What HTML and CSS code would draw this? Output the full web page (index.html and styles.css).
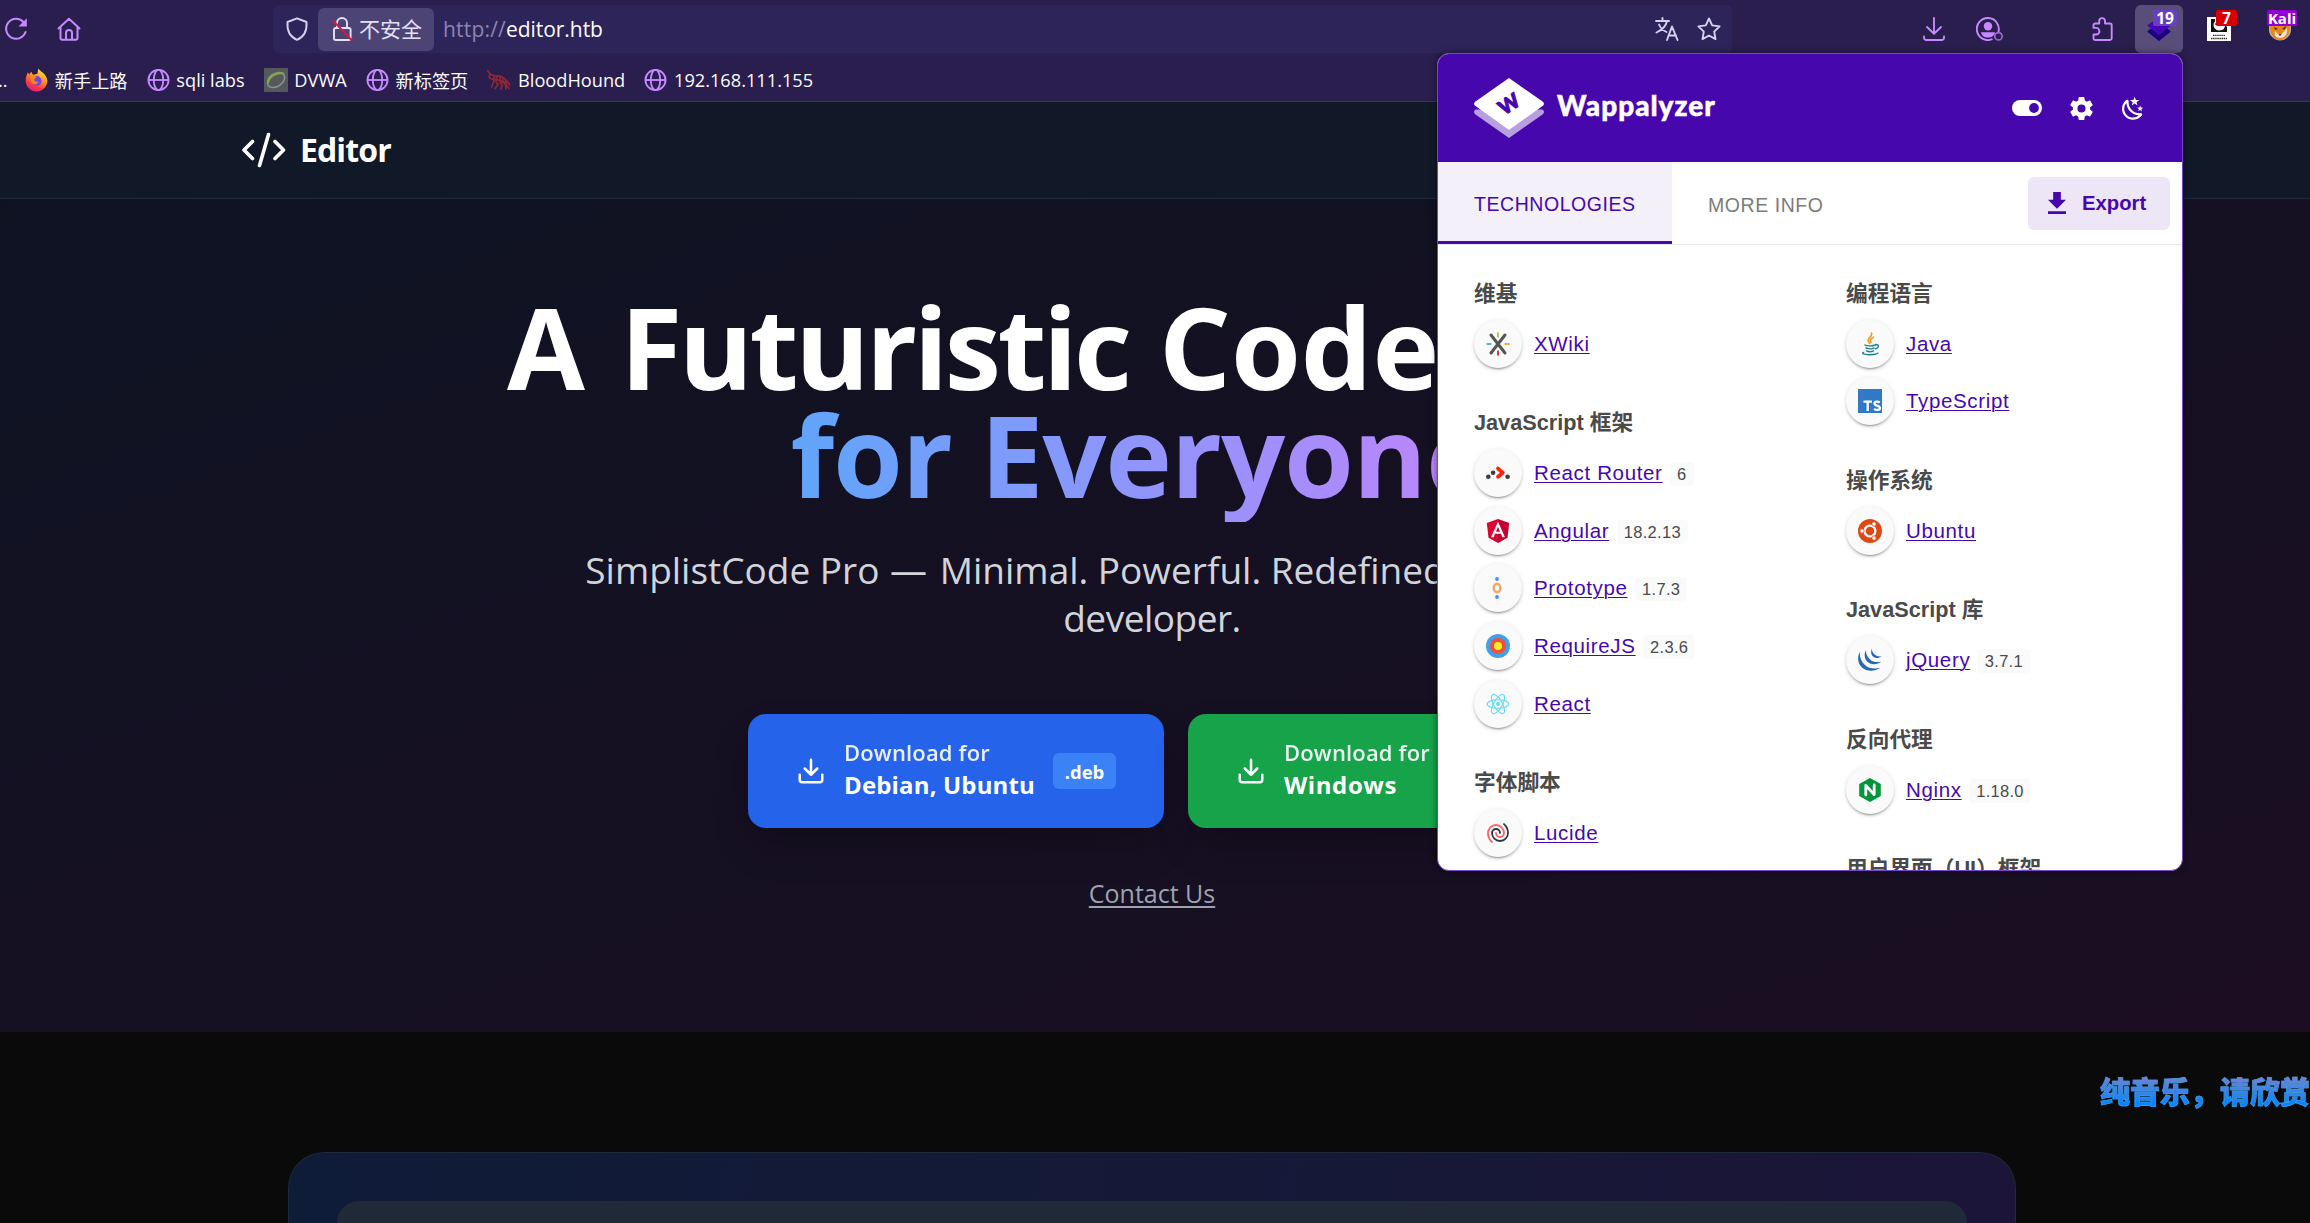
FILE: index.html
```html
<!DOCTYPE html>
<html lang="zh-CN">
<head>
<meta charset="utf-8">
<title>Editor</title>
<link rel="stylesheet" href="styles.css">
</head>
<body>
<svg class="defs" width="0" height="0">
  <symbol id="globe" viewBox="0 0 16 16"><g fill="none" stroke="currentColor" stroke-width="1.3"><circle cx="8" cy="8" r="7"/><ellipse cx="8" cy="8" rx="3.3" ry="7"/><path d="M1 8h14"/></g></symbol>
  <symbol id="dl" viewBox="0 0 24 24"><path fill="none" stroke="currentColor" stroke-width="2" stroke-linecap="round" stroke-linejoin="round" d="M12 3v12M7 10l5 5 5-5M21 15v4a2 2 0 0 1-2 2H5a2 2 0 0 1-2-2v-4"/></symbol>
</svg>

<div class="chrome">
  <div class="toolbar">
    <svg class="ic reload" viewBox="0 0 24 24"><path fill="none" stroke="currentColor" stroke-width="2" stroke-linecap="round" d="M21.6 15A10 10 0 1 1 19.5 5"/><path fill="currentColor" d="M22.8 1.2v8.300h-8.300z"/></svg>
    <svg class="ic home" viewBox="0 0 24 24"><path fill="none" stroke="currentColor" stroke-width="2" stroke-linejoin="round" stroke-linecap="round" d="M1.500 11.500L12 1.800l10.500 9.700M3.500 10v11a1.800 1.800 0 0 0 1.800 1.800h13.400a1.800 1.800 0 0 0 1.800-1.800V10M9 22.500v-6.500a3 3 0 0 1 6 0v6.500"/></svg>
    <div class="urlbar">
      <svg class="ic shield" viewBox="0 0 24 24"><path fill="none" stroke="currentColor" stroke-width="1.900" stroke-linejoin="round" d="M12 1.300l9.500 3.700c.6 7.500-1.800 14.500-9.500 17.800C4.300 19.500 1.900 12.500 2.500 5z"/></svg>
      <div class="identity">
        <svg class="ic lock" viewBox="0 0 21 24"><path fill="none" stroke="currentColor" stroke-width="1.900" d="M5 11V6a5 5 0 0 1 10 0v5M3.800 11h13a1.800 1.800 0 0 1 1.800 1.800v8.400a1.800 1.800 0 0 1-1.800 1.800h-13A1.800 1.800 0 0 1 2 21.200v-8.400A1.800 1.800 0 0 1 3.800 11z"/><path stroke="#e2123f" stroke-width="2" stroke-linecap="round" d="M1.500 4l18 19"/></svg>
        <span>不安全</span>
      </div>
      <div class="url"><span class="scheme">http://</span><span class="host">editor.htb</span></div>
      <svg class="ic translate" viewBox="0 0 24 24"><g fill="none" stroke="currentColor" stroke-width="1.900" stroke-linecap="round" stroke-linejoin="round"><path d="M1 4h13M7.500 1v3M12 4c-1 5-5 9-10.500 11.500M4 7.500c1.500 3.500 4 6 7.500 7.500M12 23l5-13.500L22.500 23M13.500 18.500h7.500"/></g></svg>
      <svg class="ic star" viewBox="0 0 24 24"><path fill="none" stroke="currentColor" stroke-width="1.900" stroke-linejoin="round" d="M12 1.500l3.200 6.900 7.400 1-5.400 5.200 1.300 7.500L12 18.500l-6.500 3.600 1.300-7.500L1.400 9.400l7.400-1z"/></svg>
    </div>
    <svg class="ic download" viewBox="0 0 24 24"><path fill="none" stroke="currentColor" stroke-width="1.900" stroke-linecap="round" stroke-linejoin="round" d="M12 1v15.500M5 10l7 6.800 7-6.800M2 19.500v1.300A2.200 2.200 0 0 0 4.200 23h15.600a2.200 2.200 0 0 0 2.200-2.200v-1.300"/></svg>
    <svg class="ic account" viewBox="0 0 28 24"><path fill="none" stroke="currentColor" stroke-width="1.900" d="M16.500 22A11 11 0 1 1 22.400 15"/><circle cx="12" cy="9.300" r="4.200" fill="currentColor"/><path fill="currentColor" d="M5 15.200h14c-.6 3.600-3.600 5.400-7 5.400s-6.400-1.800-7-5.400z"/><circle cx="22.500" cy="19.300" r="3.700" fill="none" stroke="currentColor" stroke-width="1.700" opacity=".7"/></svg>
    <svg class="ic puzzle" viewBox="0 0 21 24"><path fill="none" stroke="currentColor" stroke-width="1.900" stroke-linejoin="round" d="M1.500 10.500V8.200A1.700 1.700 0 0 1 3.200 6.500h4V4a2.900 2.900 0 0 1 5.800 0v2.500h5A1.700 1.700 0 0 1 19.700 8.200v13A1.700 1.700 0 0 1 18 23H3.200a1.700 1.700 0 0 1-1.700-1.700v-3.800h2.600a3.300 3.300 0 0 0 0-6.600H1.500z"/></svg>
    <div class="ext ext-active">
      <svg viewBox="0 0 24 24" width="24" height="24"><path fill="#1a0080" d="M12 24L0 14.500 12 5l12 9.500z"/><path fill="#4608b4" d="M12 18L0 8.500 12 0l12 8.500z"/></svg>
      <span class="badge badge-19">19</span>
    </div>
    <div class="ext">
      <svg viewBox="0 0 24 24" width="24" height="24"><path fill="#fff" d="M0 0h24v24H0z"/><path fill="#111" d="M4 2h4v5c-1 3 0 6 4 6.500 5 0 6-3 6-5.500l2 2v5H4v-4z"/><circle cx="11.500" cy="8" r="5" fill="#f4f4f4"/><circle cx="9.500" cy="7" r="1.200"/><circle cx="13.500" cy="7" r="1.200"/><path stroke="#333" stroke-width="1.300" stroke-dasharray="1.500 .6" d="M6 18.300h12M4 21.500h16"/></svg>
      <span class="badge badge-7">7</span>
    </div>
    <div class="ext">
      <svg viewBox="0 0 24 24" width="24" height="24"><path fill="#b5b0a4" d="M1 6h22v7c0 6-6 10.500-11 10.500S1 19 1 13z"/><path fill="#e8861b" d="M2.500 7l19-.5c2 8-3 16.500-9.500 16.500S1 16 2.500 7z"/><path fill="#eee7dc" d="M7 14l5 5 7-8c1 7-3 10-7 10s-6-3-5-7z"/><path fill="#5b2b0a" d="M6 10l4 2-3 1zM18 9l-4 3 3 .5zM10.500 17h3l-1.500 2z"/></svg>
      <span class="badge badge-kali">Kali</span>
    </div>
  </div>
  <div class="bookmarks">
    <span class="cut">..</span>
    <span class="bm"><svg viewBox="0 0 24 24" width="23" height="24"><defs><linearGradient id="fx" x1=".8" y1="0" x2=".3" y2="1"><stop offset="0" stop-color="#fff14a"/><stop offset=".4" stop-color="#ff9a1f"/><stop offset=".75" stop-color="#ff3b46"/><stop offset="1" stop-color="#e31587"/></linearGradient></defs><path fill="url(#fx)" d="M14 0c1 3 8.500 5 9.300 12.500C23.500 19 18 24 12 24S.5 19 .7 12.500C.8 9 2 6.500 3 4c.6 1 1 1.800 1.500 2.500C5 5 6 4 7 3.500c0 1.500.5 2.500 2 3l4-1C13.500 3.500 13.500 1.500 14 0z"/><circle cx="12" cy="13" r="5.200" fill="#7542e5"/><path fill="#ff8a16" d="M6 8c3-1 5 0 6.500 1.500-2 0-2.500 1.300-3 2.500.8 2 2.500 2 4.500 1.500-1 3-4 4-6 2.500S5 11 6 8z"/></svg>新手上路</span>
    <span class="bm"><svg class="gl"><use href="#globe"/></svg>sqli labs</span>
    <span class="bm"><svg viewBox="0 0 24 24" width="24" height="24"><path fill="#55595c" d="M0 0h24v24H0z"/><ellipse cx="12" cy="12" rx="9.500" ry="6.500" fill="none" stroke="#8d9295" stroke-width="1.500" transform="rotate(-35 12 12)"/><path fill="none" stroke="#82a83a" stroke-width="2" d="M4 15C5 9 12 4 20 5.500"/></svg>DVWA</span>
    <span class="bm"><svg class="gl"><use href="#globe"/></svg>新标签页</span>
    <span class="bm"><svg viewBox="0 0 24 24" width="24" height="24"><g fill="none" stroke="#8f2638" stroke-width="1.700" stroke-linecap="round"><path d="M.8 3l3 3.500 5 1.500c5-1 10 2 14 9M3 5.500l-1 4 4 2M7 8v5l-2.500 6M10 8.500l-1 5 2 3-3 4M13 9v5l2 3-1 4M16 10.500l-1 3 3.500 3.500.5 4M19 12.500v4l3 4M6 11l5 1 5 1 4 2"/></g></svg>BloodHound</span>
    <span class="bm"><svg class="gl"><use href="#globe"/></svg>192.168.111.155</span>
  </div>
</div>

<header class="site-header">
  <div class="brand">
    <svg viewBox="0 0 48 40" width="48" height="40"><path fill="none" stroke="#fff" stroke-width="3.600" stroke-linecap="round" stroke-linejoin="round" d="M12.500 11.500L4 20l8.500 8.500M35 11.500l8.500 8.500-8.500 8.500M28.500 4.500l-9 31"/></svg>
    <span>Editor</span>
  </div>
</header>

<section class="hero">
  <h1><span class="l1"><b class="w-a">A</b> <b class="w-futuristic">Futuristic</b> <b>Code Editor</b></span><span class="l2">for Everyone</span></h1>
  <p class="lead">SimplistCode Pro <span class="dash">—</span> Minimal. Powerful. Redefined for the modern <span class="tail">developer.</span></p>
  <div class="cta">
    <a class="btn blue"><svg width="30" height="30"><use href="#dl"/></svg><span class="lbl"><small>Download for</small><b>Debian, Ubuntu</b></span><i>.deb</i></a>
    <a class="btn green"><svg width="30" height="30"><use href="#dl"/></svg><span class="lbl"><small>Download for</small><b>Windows</b></span><i>.exe</i></a>
  </div>
  <a class="contact">Contact Us</a>
</section>

<section class="preview">
  <div class="card"><div class="inner"></div></div>
</section>

<div class="lyrics">纯音乐，请欣赏</div>

<aside class="panel">
  <div class="p-head">
    <svg class="logo" viewBox="0 0 72 62" width="72" height="62"><path fill="#b79fe0" d="M2.500 32.500h67q3 2.500 0 5L36 61 2.500 37.500q-3-2.500 0-5z"/><path fill="#fff" d="M36 1l33.500 23.500q3 2.300 0 4.600L36 53 2.500 29.100q-3-2.300 0-4.600z"/><text class="mark" x="36" y="34" text-anchor="middle" transform="rotate(-33 36 27)">W</text></svg>
    <span class="name">Wappalyzer</span>
    <svg class="toggle" viewBox="0 0 30 16" width="30" height="16"><rect width="30" height="16" rx="8" fill="#fff"/><circle cx="22" cy="8" r="4.900" fill="#4608ad"/></svg>
    <svg class="gear" viewBox="2 2 20 20" width="23" height="23"><path fill="#fff" d="M12 15.500A3.500 3.500 0 0 1 8.500 12 3.500 3.500 0 0 1 12 8.500a3.500 3.500 0 0 1 3.500 3.500 3.500 3.500 0 0 1-3.500 3.500m7.430-2.530c.04-.32.070-.64.070-.97s-.03-.66-.07-1l2.110-1.630c.19-.15.24-.42.12-.64l-2-3.460c-.12-.22-.39-.31-.61-.22l-2.490 1c-.52-.39-1.060-.73-1.690-.98l-.37-2.650A.506.506 0 0 0 14 2h-4c-.25 0-.46.180-.5.420l-.37 2.650c-.63.250-1.170.590-1.690.980l-2.490-1c-.22-.09-.49 0-.61.220l-2 3.460c-.13.220-.07.490.12.640L4.570 11c-.04.340-.07.670-.07 1s.03.650.07.970l-2.110 1.660c-.19.150-.25.420-.12.640l2 3.460c.12.220.39.300.61.220l2.490-1.010c.52.400 1.060.740 1.690.990l.37 2.650c.04.240.25.420.5.420h4c.25 0 .46-.18.500-.42l.37-2.650c.63-.26 1.170-.59 1.690-.99l2.490 1.010c.22.080.49 0 .61-.22l2-3.460c.12-.22.070-.49-.12-.64l-2.110-1.660Z"/></svg>
    <svg class="moon" viewBox="2 1.500 20 20.500" width="22" height="23"><path fill="#fff" d="m17.750 4.090-2.530 1.940.91 3.060-2.630-1.810-2.630 1.810.91-3.060-2.530-1.940L12.440 4l1.060-3 1.060 3 3.190.09m3.500 6.910-1.640 1.250.59 1.980-1.700-1.170-1.700 1.170.59-1.980L15.750 11l2.060-.05L18.500 9l.69 1.950 2.060.05m-2.280 4.950c.83-.08 1.720 1.100 1.190 1.850-.32.450-.66.870-1.080 1.270C15.170 23 8.840 23 4.940 19.070c-3.910-3.900-3.910-10.240 0-14.140.4-.4.820-.76 1.270-1.080.75-.53 1.930.36 1.850 1.190-.27 2.860.69 5.830 2.890 8.020a9.960 9.960 0 0 0 8.020 2.890m-1.640 2.020a12.080 12.080 0 0 1-7.800-3.470c-2.170-2.190-3.330-5-3.490-7.820-2.810 3.140-2.700 7.960.31 10.980 3.020 3.010 7.840 3.120 10.980.31Z"/></svg>
  </div>
  <div class="p-tabs">
    <span class="tab on">TECHNOLOGIES</span><span class="tab">MORE INFO</span>
    <span class="export"><svg viewBox="5 3 14 17" width="18" height="22"><path fill="#4608ad" d="M5 20h14v-2H5m14-9h-4V3H9v6H5l7 7 7-7Z"/></svg>Export</span>
  </div>
  <div class="p-body">
    <div class="col">
      <h4>维基</h4>
      <ul>
        <li><i><svg viewBox="0 0 24 24"><path stroke="#555" stroke-width="3" stroke-linecap="round" d="M5 3l14 18M19 3L5 21"/><path stroke="#9c3" stroke-width="1.800" d="M12 .5v5"/><path stroke="#d23" stroke-width="1.800" d="M12 18.500v5"/><path stroke="#4ad" stroke-width="1.800" d="M.5 12h5"/><path stroke="#f93" stroke-width="1.800" d="M18.500 12h5"/></svg></i><a>XWiki</a></li>
      </ul>
      <h4>JavaScript 框架</h4>
      <ul>
        <li><i><svg viewBox="0 0 24 24"><g fill="#3d3d3d"><circle cx="2.300" cy="15.800" r="2.300"/><circle cx="7.100" cy="11.700" r="2.300"/><circle cx="21.600" cy="15.800" r="2.300"/></g><path fill="none" stroke="#f21" stroke-width="3.800" stroke-linecap="round" stroke-linejoin="round" d="M12 7.600l4.800 4.100L12 15.800"/></svg></i><a>React Router</a><em>6</em></li>
        <li><i><svg viewBox="0 0 24 24"><path fill="#dd0031" d="M12 0L.8 4l1.700 14.800L12 24z"/><path fill="#c3002f" d="M12 0l11.200 4-1.700 14.800L12 24z"/><path fill="#fff" d="M12 2.700L5 18.300h2.600L9 14.800h6l1.400 3.500H19zm2 10H10l2-4.900z"/></svg></i><a>Angular</a><em>18.2.13</em></li>
        <li><i><svg viewBox="0 0 24 24"><circle cx="11" cy="3" r="1.900" fill="#4f8df5"/><circle cx="11" cy="21" r="1.900" fill="#4f8df5"/><ellipse cx="11" cy="12" rx="3.300" ry="4.200" fill="none" stroke="#f9a45c" stroke-width="2.400"/></svg></i><a>Prototype</a><em>1.7.3</em></li>
        <li><i><svg viewBox="0 0 24 24"><circle cx="12" cy="12" r="12" fill="#42a0e8"/><circle cx="12" cy="12" r="8" fill="#f04e3e"/><circle cx="12" cy="12" r="4" fill="#fff21f"/></svg></i><a>RequireJS</a><em>2.3.6</em></li>
        <li><i><svg viewBox="0 0 24 24"><circle cx="12" cy="12" r="2" fill="#61dafb"/><g fill="none" stroke="#61dafb" stroke-width="1.100"><ellipse cx="12" cy="12" rx="10.800" ry="4.300"/><ellipse cx="12" cy="12" rx="10.800" ry="4.300" transform="rotate(60 12 12)"/><ellipse cx="12" cy="12" rx="10.800" ry="4.300" transform="rotate(120 12 12)"/></g></svg></i><a>React</a></li>
      </ul>
      <h4>字体脚本</h4>
      <ul>
        <li><i><svg viewBox="0 0 24 24"><g fill="none" stroke-width="1.800" stroke-linecap="round"><path stroke="#2d3748" d="M14 12a4 4 0 0 0-8 0 8 8 0 0 0 16 0 11.970 11.970 0 0 0-4-8.944"/><path stroke="#f56565" d="M10 12a4 4 0 0 0 8 0 8 8 0 1 0-16 0 11.970 11.970 0 0 0 4.063 9"/></g></svg></i><a>Lucide</a></li>
      </ul>
    </div>
    <div class="col">
      <h4>编程语言</h4>
      <ul>
        <li><i><svg viewBox="0 0 24 24"><path fill="none" stroke="#f8981d" stroke-width="1.600" stroke-linecap="round" d="M13.500 1c1.500 4-5 5-3 8.500l1.200 2.200M15.500 5.200c-3 1.500-4 3-2.500 5"/><g fill="none" stroke="#20809a" stroke-width="1.400" stroke-linecap="round"><path d="M7 13c2 1.300 8 1 10.500 0M17.500 12.500c4-.3 3.500 3.500 0 4.300M8 16c2 1 6 1 8 0M8.500 18.800c2 1 5 1 7 0M5.500 20.500C3 21.500 6 22.600 11 22.700s9-.8 9-1.700"/></g></svg></i><a>Java</a></li>
        <li><i><svg viewBox="0 0 24 24"><path fill="#3178c6" d="M0 0h24v24H0z"/><path fill="none" stroke="#fff" stroke-width="2.300" d="M5.500 12.600h8.400M9.700 12.600V22M21.800 13.500c-1.800-1.200-5.300-1.300-5.300 1.100 0 2.700 5.500 1.700 5.500 4.400 0 2.600-4 2.400-6 .8"/></svg></i><a>TypeScript</a></li>
      </ul>
      <h4>操作系统</h4>
      <ul>
        <li><i><svg viewBox="0 0 24 24"><circle cx="12" cy="12" r="12" fill="#dd4814"/><circle cx="12" cy="12" r="5.400" fill="none" stroke="#fff" stroke-width="2.300"/><g fill="#fff" stroke="#dd4814" stroke-width=".8"><circle cx="4" cy="12" r="2.200"/><circle cx="16" cy="5" r="2.200"/><circle cx="16" cy="19" r="2.200"/></g></svg></i><a>Ubuntu</a></li>
      </ul>
      <h4>JavaScript 库</h4>
      <ul>
        <li><i><svg viewBox="0 0 24 24"><g fill="#2968b2"><path d="M2.200 3.500C-.8 8.500-.8 15 4 19.500c5 4.300 12.500 4.200 18.500.3 -6 1.700-12 .8-15.800-3C2.900 13 1.200 8.300 2.200 3.500z"/><path d="M8 2C5.800 6.500 6.300 11 9.800 14c3.800 3.200 9.400 2.900 13.600-.5-4.200 1.200-8.400.6-11.300-2C9.300 9 7.700 5.800 8 2z"/><path d="M13.800 .8c-1.300 3.400-.8 6.200 1.500 8 2.500 1.900 5.800 1.700 8.500-.5-2.700.6-5.200.1-7.200-1.700-1.700-1.500-2.700-3.400-2.800-5.800z"/></g></svg></i><a>jQuery</a><em>3.7.1</em></li>
      </ul>
      <h4>反向代理</h4>
      <ul>
        <li><i><svg viewBox="0 0 24 24"><path fill="#009639" d="M12 0l10.800 6v12L12 24 1.200 18V6z"/><path fill="none" stroke="#fff" stroke-width="2.800" stroke-linecap="round" stroke-linejoin="round" d="M7.800 17V7.500L16.200 16.500V7"/></svg></i><a>Nginx</a><em>1.18.0</em></li>
      </ul>
      <h4>用户界面（UI）框架</h4>
    </div>
  </div>
</aside>
</body>
</html>
```
FILE: styles.css
```css
* { box-sizing: border-box; margin: 0; padding: 0; }
body {
  position: relative;
  width: 2310px;
  height: 1223px;
  overflow: hidden;
  background: #0a0a0a;
  color: #fff;
  font-family: "Open Sans", "Noto Sans", "Noto Sans CJK SC", sans-serif;
}
ul { list-style: none; }
svg { display: block; flex: none; }
.defs { position: absolute; }

/* browser chrome */
.chrome {
  height: 102px;
  background: #291e4d;
  border-bottom: 1px solid #3a3266;
  color: #fbfbfe;
}
.toolbar { display: flex; align-items: center; height: 58px; color: #c689ff; }
.ic { width: 24px; height: 24px; }
.reload { margin-left: 4px; }
.home { margin-left: 29px; margin-right: 192px; }
.urlbar {
  display: flex;
  flex: none;
  align-items: center;
  width: 1459px;
  height: 48px;
  padding: 0 11px 0 12px;
  border-radius: 6px;
  background: #2d2559;
  color: #d9d0f2;
}
.identity {
  display: flex;
  align-items: center;
  gap: 6px;
  width: 116px;
  height: 43px;
  margin-left: 9px;
  padding-left: 14px;
  border-radius: 6px;
  background: #4c4475;
  color: #e6e0f7;
  font-size: 21px;
}
.identity span { padding-bottom: 2px; }
.lock { width: 21px; }
.url { flex: 1; margin-left: 9px; font-size: 21px; }
.scheme { color: #8e84b3; letter-spacing: .2px; }
.host { color: #fbfbfe; letter-spacing: -.05px; }
.star { margin-left: 18px; }
.download { margin-left: 190px; }
.account { width: 28px; margin-left: 30px; }
.puzzle { width: 21px; margin: 0 22px 0 88px; }
.ext {
  position: relative;
  display: flex;
  flex: none;
  align-items: center;
  justify-content: center;
  width: 48px;
  height: 48px;
  margin-right: 13px;
  border-radius: 6px;
}
.ext-active { margin-right: 12px; background: #594e7a; }
.ext:last-child { margin-right: 0; }
.badge {
  position: absolute;
  top: 5px;
  height: 16px;
  border-radius: 2px;
  color: #fff;
  font-size: 15.5px;
  font-weight: 700;
  line-height: 16px;
  text-align: center;
}
.badge-19 { left: 18px; width: 24px; background: #6a3ec0; }
.badge-7 { left: 21px; width: 21px; background: #d90000; }
.badge-kali { left: 11px; width: 30px; background: #9400d3; font-size: 15px; }
.bookmarks {
  display: flex;
  align-items: center;
  gap: 19px;
  height: 43px;
  padding-top: 1px;
  font-size: 18.2px;
}
.cut { width: 8px; margin-left: -2px; }
.bm { display: flex; flex: none; align-items: center; gap: 6.8px; }
.gl { width: 23px; height: 24px; color: #c689ff; }

/* site header */
.site-header {
  height: 97px;
  padding-left: 240px;
  background: #111827;
  border-bottom: 1px solid #1f2937;
}
.brand {
  display: flex;
  align-items: center;
  gap: 12px;
  height: 95px;
  font-size: 32px;
  font-weight: 700;
  letter-spacing: -.9px;
}
.brand span { padding-bottom: 1px; }

/* hero */
.hero {
  display: flex;
  flex-direction: column;
  align-items: center;
  height: 833px;
  padding: 93px 6px 0 0;
  background: linear-gradient(to bottom right, #0e1322 0%, #151022 50%, #190e22 88%, #1d0c22 100%);
}
h1 { font-size: 113px; line-height: 108px; font-weight: 700; white-space: nowrap; }
h1 b { font-weight: 700; }
h1 span { display: block; }
.l1 { width: 1290px; word-spacing: 1px; }
.w-a { margin-right: 5px; }
.w-futuristic { letter-spacing: -3.500px; }
.l2 {
  width: max-content;
  margin: 0 auto;
  position: relative;
  left: -11px;
  padding-bottom: 14px;
  background: linear-gradient(to right, #60a5fa, #c084fc);
  -webkit-background-clip: text;
  background-clip: text;
  color: transparent;
  letter-spacing: -1.2px;
}
.lead {
  width: 1152px;
  margin-top: 24px;
  color: #d1d5db;
  font-size: 37px;
  line-height: 48px;
  text-align: center;
}
.dash { padding: 0 3px 0 1px; }
.tail { letter-spacing: -.5px; }
.cta { display: flex; gap: 24px; width: 808px; margin-top: 72px; }
.btn {
  display: flex;
  align-items: center;
  gap: 18px;
  width: 416px;
  height: 114px;
  padding: 0 48px;
  border-radius: 18px;
  box-shadow: 0 20px 38px -4px rgba(0, 0, 0, .22);
}
.green { width: 368px; }
.blue { background: #2563eb; }
.green { background: #16a34a; }
.lbl { display: flex; flex-direction: column; padding-bottom: 2px; white-space: nowrap; }
.lbl small { font-size: 22px; font-weight: 600; line-height: 30px; opacity: .9; letter-spacing: .15px; }
.lbl b { font-size: 24px; line-height: 36px; letter-spacing: .15px; }
.green .lbl b { letter-spacing: .6px; }
.btn i {
  display: flex;
  align-items: center;
  justify-content: center;
  width: 63px;
  height: 36px;
  border-radius: 6px;
  background: #3b82f6;
  font-size: 18.500px;
  font-style: normal;
  font-weight: 700;
}
.green i { background: #22c55e; }
.contact {
  margin-top: 47px;
  color: #9ca3af;
  font-size: 25px;
  line-height: 36px;
  text-decoration: underline;
  text-decoration-thickness: 2px;
  text-underline-offset: 3px;
}

/* preview card, cut off by the fold */
.preview { height: 191px; padding: 120px 294px 0 288px; }
.card {
  height: 71px;
  padding: 48px 48px 0;
  border: 1px solid #1f2937;
  border-bottom: 0;
  border-radius: 36px 36px 0 0;
  background: linear-gradient(100deg, #0f1c38, #141a38 45%, #1c1539 100%);
}
.inner { height: 22px; border-radius: 24px 24px 0 0; background: #1f2937; }

/* desktop lyrics overlay */
.lyrics {
  position: absolute;
  right: 0;
  top: 1068px;
  font: 900 30px/44px "Noto Sans CJK SC", sans-serif;
  background: linear-gradient(#7a7fd0 18%, #0a84ff 80%);
  -webkit-background-clip: text;
  background-clip: text;
  color: transparent;
  -webkit-text-stroke: .6px #3aa0d8;
}

/* extension popup */
.panel {
  position: absolute;
  left: 1437px;
  top: 53px;
  width: 746px;
  height: 818px;
  overflow: hidden;
  border: 1px solid #7a45c8;
  border-radius: 12px;
  background: #fff;
  box-shadow: 0 0 6px rgba(0, 0, 0, .5);
  color: #4a4a4a;
  font-family: "Liberation Sans", "Noto Sans CJK SC", sans-serif;
}
.p-head {
  display: flex;
  align-items: center;
  height: 108px;
  padding: 0 38px 0 36px;
  background: #4608ad;
  color: #fff;
}
.logo { margin-left: -1px; }
.mark { fill: #4608ad; stroke: #4608ad; stroke-width: 1px; font: 900 20px Lato, sans-serif; }
.name {
  flex: 1;
  margin-left: 12px;
  padding-bottom: 6px;
  font: 900 28px/36px Lato, sans-serif;
  letter-spacing: 1px;
  -webkit-text-stroke: .5px #fff;
}
.gear { margin-left: 28px; }
.moon { margin-left: 29px; }
.p-tabs { display: flex; align-items: center; height: 83px; border-bottom: 1px solid #e8e8e8; }
.tab {
  height: 82px;
  padding: 0 36px;
  color: #7c7c7c;
  font-size: 19.5px;
  line-height: 86px;
  letter-spacing: .55px;
}
.on { width: 234px; background: #f3f0fa; border-bottom: 3px solid #4608ad; color: #4608ad; line-height: 84px; }
.export {
  display: flex;
  align-items: center;
  gap: 16px;
  width: 142px;
  height: 53px;
  margin: 0 12px 0 auto;
  padding-left: 20px;
  border-radius: 6px;
  background: #ece6f6;
  color: #4608ad;
  font-size: 20.3px;
  font-weight: 700;
}
.p-body { display: flex; padding: 31px 0 0 36px; }
.col { flex: none; width: 372px; }
h4 { font-size: 21.7px; line-height: 36px; }
ul { padding: 3.100px 0 32.700px; }
li { display: flex; align-items: center; height: 57.6px; }
li i {
  display: flex;
  align-items: center;
  justify-content: center;
  width: 48px;
  height: 48px;
  border-radius: 50%;
  background: #fafafa;
  box-shadow: 0 3px 1px -2px rgba(0, 0, 0, .2), 0 2px 2px rgba(0, 0, 0, .14), 0 1px 5px rgba(0, 0, 0, .12);
}
li i svg { width: 24px; height: 24px; }
li a {
  margin-left: 12px;
  color: #4608ad;
  font-size: 20.5px;
  letter-spacing: .65px;
  text-decoration: underline;
  text-decoration-thickness: 1px;
  text-underline-offset: 2px;
}
li em {
  height: 24px;
  margin-left: 7.500px;
  margin-top: 2px;
  padding: 0 7px;
  border-radius: 4px;
  background: #fafafa;
  font-size: 16.5px;
  font-style: normal;
  line-height: 24px;
  letter-spacing: .3px;
}
```
